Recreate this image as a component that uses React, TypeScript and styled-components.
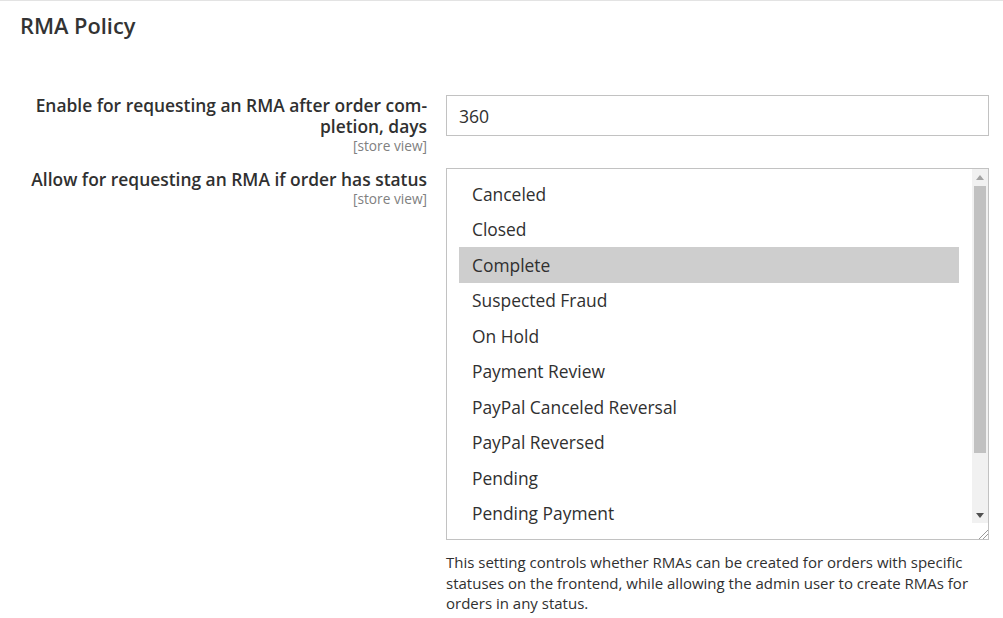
import React from "react";
import styled, { createGlobalStyle } from "styled-components";

const GlobalStyle = createGlobalStyle`
  html, body {
    margin: 0;
    padding: 0;
    background: #ffffff;
  }
  body {
    font-family: "Open Sans", "Noto Sans", sans-serif;
    color: #303030;
  }
`;

const Section = styled.section`
  border-top: 1px solid #e3e3e3;
  padding: 12px 15px 0 20px;
`;

const Title = styled.h2`
  margin: 0;
  font-size: 21.8px;
  line-height: 26px;
  font-weight: 600;
  color: #333333;
`;

const Rows = styled.div`
  display: flex;
  flex-direction: column;
  gap: 13px;
  margin-top: 56px;
`;

const Row = styled.div`
  display: grid;
  grid-template-columns: 407px 543px;
  column-gap: 19px;
  align-items: start;
`;

const Label = styled.label<{ $offset?: number }>`
  display: flex;
  flex-direction: column;
  align-items: flex-end;
  text-align: right;
  font-size: 17.4px;
  line-height: 21px;
  font-weight: 600;
  color: #303030;
  padding-top: ${(p) => p.$offset ?? 0}px;
`;

const Scope = styled.span`
  font-size: 13.7px;
  line-height: 18px;
  font-weight: 400;
  color: #808080;
`;

const Field = styled.div`
  display: flex;
  flex-direction: column;
`;

const TextInput = styled.input`
  box-sizing: border-box;
  width: 100%;
  height: 41px;
  margin: 0;
  padding: 0 12px;
  border: 1px solid #c2c2c2;
  border-radius: 0;
  font-family: inherit;
  font-size: 17.6px;
  color: #303030;
  outline: none;
`;

const ListBox = styled.div`
  box-sizing: border-box;
  display: flex;
  height: 372px;
  border: 1px solid #c2c2c2;
  background: #ffffff;
`;

const Options = styled.ul`
  flex: 1;
  margin: 0;
  padding: 7px 13px 0 12px;
  list-style: none;
  overflow: hidden;
`;

const Option = styled.li<{ $selected?: boolean }>`
  height: 35.5px;
  display: flex;
  align-items: center;
  padding-left: 13px;
  font-size: 17.4px;
  color: #303030;
  background: ${(p) => (p.$selected ? "#cecece" : "transparent")};
`;

const ScrollBar = styled.div`
  width: 16px;
  display: flex;
  flex-direction: column;
  background: #f1f1f1;
`;

const ArrowButton = styled.div`
  height: 16px;
  display: flex;
  align-items: center;
  justify-content: center;
`;

const Track = styled.div`
  flex: 1;
  display: flex;
  flex-direction: column;
  padding: 1px 2px 0;
`;

const Thumb = styled.div`
  height: 267px;
  background: #c1c1c1;
`;

const Resizer = styled.div`
  height: 16px;
  background: #ffffff;
  display: flex;
  align-items: flex-end;
  justify-content: flex-end;
`;

const Note = styled.p`
  margin: 12px 0 0;
  font-size: 15px;
  line-height: 20.5px;
  color: #303030;
`;

const statuses = [
  "Canceled",
  "Closed",
  "Complete",
  "Suspected Fraud",
  "On Hold",
  "Payment Review",
  "PayPal Canceled Reversal",
  "PayPal Reversed",
  "Pending",
  "Pending Payment",
];

export default function App() {
  return (
    <>
      <GlobalStyle />
      <Section>
        <Title>RMA Policy</Title>
        <Rows>
          <Row>
            <Label>
              <span>Enable for requesting an RMA after order com{"\u00AD"}pletion, days</span>
              <Scope>[store view]</Scope>
            </Label>
            <Field>
              <TextInput defaultValue="360" />
            </Field>
          </Row>
          <Row>
            <Label $offset={1}>
              <span>Allow for requesting an RMA if order has status</span>
              <Scope>[store view]</Scope>
            </Label>
            <Field>
              <ListBox>
                <Options>
                  {statuses.map((s) => (
                    <Option key={s} $selected={s === "Complete"}>
                      {s}
                    </Option>
                  ))}
                </Options>
                <ScrollBar>
                  <ArrowButton>
                    <svg width="8" height="5" viewBox="0 0 8 5">
                      <polygon points="0,5 8,5 4,0" fill="#a3a3a3" />
                    </svg>
                  </ArrowButton>
                  <Track>
                    <Thumb />
                  </Track>
                  <ArrowButton>
                    <svg width="8" height="5" viewBox="0 0 8 5">
                      <polygon points="0,0 8,0 4,5" fill="#505050" />
                    </svg>
                  </ArrowButton>
                  <Resizer>
                    <svg width="10" height="10" viewBox="0 0 10 10">
                      <line x1="1" y1="10" x2="10" y2="1" stroke="#9a9a9a" strokeWidth="1" />
                      <line x1="5" y1="10" x2="10" y2="5" stroke="#9a9a9a" strokeWidth="1" />
                    </svg>
                  </Resizer>
                </ScrollBar>
              </ListBox>
              <Note>
                This setting controls whether RMAs can be created for orders with specific
                statuses on the frontend, while allowing the admin user to create RMAs for
                orders in any status.
              </Note>
            </Field>
          </Row>
        </Rows>
      </Section>
    </>
  );
}
